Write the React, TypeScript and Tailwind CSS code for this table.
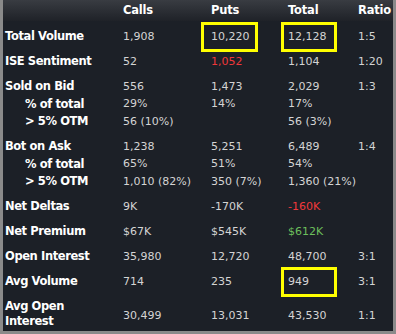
import React from "react";

type Row = {
  label: string;
  sub?: boolean;
  calls?: string;
  puts?: string;
  total?: string;
  ratio?: string;
  putsColor?: string;
  totalColor?: string;
  boxPuts?: boolean;
  boxTotal?: boolean;
  gap?: boolean;
};

const rows: Row[] = [
  { label: "Total Volume", calls: "1,908", puts: "10,220", total: "12,128", ratio: "1:5", boxPuts: true, boxTotal: true },
  { label: "ISE Sentiment", calls: "52", puts: "1,052", total: "1,104", ratio: "1:20", putsColor: "text-[#f0383a]", gap: true },
  { label: "Sold on Bid", calls: "556", puts: "1,473", total: "2,029", ratio: "1:3", gap: true },
  { label: "% of total", sub: true, calls: "29%", puts: "14%", total: "17%" },
  { label: "> 5% OTM", sub: true, calls: "56 (10%)", total: "56 (3%)" },
  { label: "Bot on Ask", calls: "1,238", puts: "5,251", total: "6,489", ratio: "1:4", gap: true },
  { label: "% of total", sub: true, calls: "65%", puts: "51%", total: "54%" },
  { label: "> 5% OTM", sub: true, calls: "1,010 (82%)", puts: "350 (7%)", total: "1,360 (21%)" },
  { label: "Net Deltas", calls: "9K", puts: "-170K", total: "-160K", totalColor: "text-[#f0383a]", gap: true },
  { label: "Net Premium", calls: "$67K", puts: "$545K", total: "$612K", totalColor: "text-[#6cbf5c]", gap: true },
  { label: "Open Interest", calls: "35,980", puts: "12,720", total: "48,700", ratio: "3:1", gap: true },
  { label: "Avg Volume", calls: "714", puts: "235", total: "949", ratio: "3:1", boxTotal: true, gap: true },
];

function Box({ left, w }: { left: string; w: string }) {
  return (
    <div
      className={`absolute top-1/2 -translate-y-1/2 h-[30px] border-[3px] border-[#ffff00] ${left} ${w}`}
    />
  );
}

export default function App() {
  return (
    <div
      className="w-[396px] h-[334px] bg-[#1c2027] border-x-[3px] border-b-[3px] border-[#8a8a8a] overflow-hidden text-[11px] text-[#d4d4d4]"
      style={{ fontFamily: '"DejaVu Sans", sans-serif' }}
    >
      <div className="h-[21px] grid grid-cols-[120px_88px_77px_70px_1fr] items-center bg-gradient-to-b from-[#393c42] to-[#1f2228] font-bold text-white text-[11.5px] tracking-[-0.2px]">
        <div />
        <div>Calls</div>
        <div>Puts</div>
        <div>Total</div>
        <div>Ratio</div>
      </div>
      <div className="pt-[7px]">
        {rows.map((r, i) => (
          <div
            key={i}
            className={`h-[17.5px] grid grid-cols-[120px_88px_77px_70px_1fr] items-center ${r.gap ? "mt-[7.5px]" : ""}`}
          >
            <div className={`font-bold text-white text-[11.5px] tracking-[-0.4px] ${r.sub ? "pl-[22px]" : "pl-[2px]"}`}>
              {r.label}
            </div>
            <div>{r.calls}</div>
            <div className={`relative ${r.putsColor ?? ""}`}>
              {r.boxPuts && <Box left="left-[-10px]" w="w-[57px]" />}
              {r.puts}
            </div>
            <div className={`relative ${r.totalColor ?? ""}`}>
              {r.boxTotal && <Box left="left-[-7px]" w="w-[56px]" />}
              {r.total}
            </div>
            <div>{r.ratio}</div>
          </div>
        ))}
        <div className="mt-[8px] grid grid-cols-[120px_88px_77px_70px_1fr] items-center">
          <div className="font-bold text-white text-[11.5px] tracking-[-0.4px] pl-[2px] leading-[15px]">
            Avg Open
            <br />
            Interest
          </div>
          <div className="pt-[5px]">30,499</div>
          <div className="pt-[5px]">13,031</div>
          <div className="pt-[5px]">43,530</div>
          <div className="pt-[5px]">1:1</div>
        </div>
      </div>
    </div>
  );
}
